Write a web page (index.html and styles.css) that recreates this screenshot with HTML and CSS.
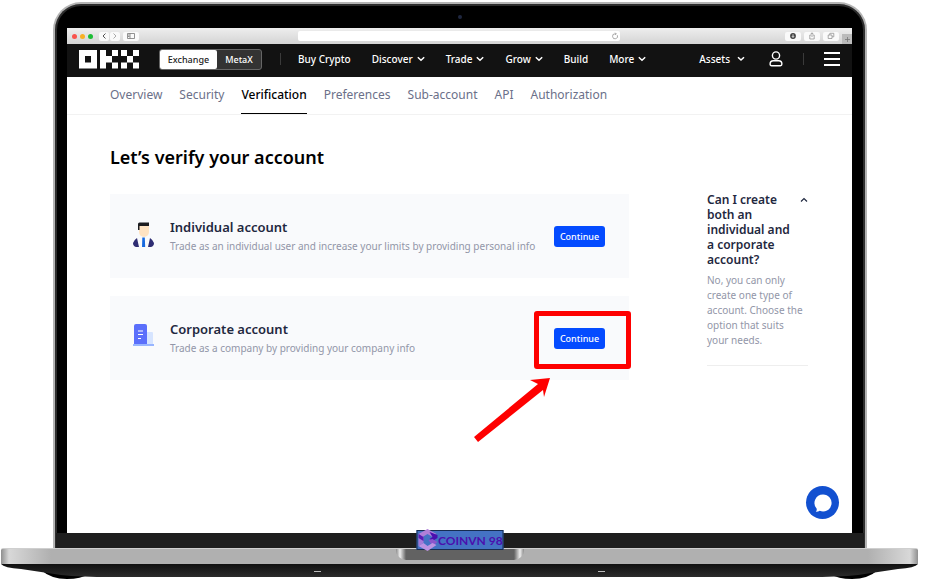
FILE: index.html
```html
<!DOCTYPE html>
<html lang="en">
<head>
  <meta charset="UTF-8">
  <meta name="viewport" content="width=device-width, initial-scale=1.0">
  <title>Account verification</title>
  <link rel="stylesheet" href="styles.css">
</head>
<body>
  <div class="laptop">
    <div class="lid">
      <div class="camera"></div>

      <div class="screen">
        <!-- Browser toolbar -->
        <div class="toolbar">
          <span class="dot red"></span>
          <span class="dot yellow"></span>
          <span class="dot green"></span>
          <div class="history">
            <button class="tool" aria-label="Back"><svg width="6" height="8" viewBox="0 0 6 8"><path d="M4.500 1.500 2 4l2.500 2.500" stroke="#555"/></svg></button>
            <button class="tool" aria-label="Forward"><svg width="6" height="8" viewBox="0 0 6 8"><path d="M1.500 1.500 4 4 1.500 6.500" stroke="#aaa"/></svg></button>
          </div>
          <button class="tool" aria-label="Sidebar"><svg width="8" height="8" viewBox="0 0 8 8"><path d="M.5 1.500h7v5h-7zM3 1.500v5M1 3h1.500M1 4.500h1.500" stroke="#777" stroke-width=".8"/></svg></button>
          <div class="address">
            <input type="text" aria-label="Address">
            <svg width="8" height="8" viewBox="0 0 8 8"><path d="M6.300 3.200A2.500 2.500 0 1 1 4 1.800h1M4.200.7 5.300 1.800 4.200 3" stroke="#888" stroke-width=".7"/></svg>
          </div>
          <div class="tools">
            <button class="tool" aria-label="Downloads"><svg width="8" height="8" viewBox="0 0 8 8"><circle cx="4" cy="4" r="2.900" fill="#444"/><path d="M4 2.300v3M2.900 4.200 4 5.400l1.100-1.200" stroke="#fff" stroke-width=".8"/></svg></button>
            <button class="tool" aria-label="Share"><svg width="8" height="8" viewBox="0 0 8 8"><path d="M3 3H1.800v4h4.400V3H5M4 5V.8M2.800 2 4 .8 5.200 2" stroke="#888" stroke-width=".7"/></svg></button>
            <button class="tool" aria-label="Tabs"><svg width="8" height="8" viewBox="0 0 8 8"><path d="M1.200 3h3.800v3.500H1.200zM2.800 3V1.300h4v3.500H5" stroke="#888" stroke-width=".7"/></svg></button>
          </div>
          <button class="new-tab" aria-label="New tab"><svg width="7" height="7" viewBox="0 0 7 7"><path d="M3.500 1v5M1 3.500h5" stroke="#777" stroke-width=".8"/></svg></button>
        </div>

        <header class="header">
          <a href="#" class="logo" aria-label="OKX">
            <svg width="61" height="19" viewBox="0 0 61 19">
              <g fill="#fff">
                <path d="M0 0h18v18.500H0zM6 6v6.500h6V6z" fill-rule="evenodd"/>
                <path d="M21 0h6v6h6v6.500h-6v6h-6zM33 0h6v6h-6zM33 12.500h6v6h-6z"/>
                <path d="M42 0h6v6h-6zM54 0h6v6h-6zM48 6h6v6.500h-6zM42 12.500h6v6h-6zM54 12.500h6v6h-6z"/>
              </g>
            </svg>
          </a>
          <div class="switch">
            <button class="active">Exchange</button>
            <button>MetaX</button>
          </div>
          <span class="divider"></span>
          <nav class="menu">
            <a href="#">Buy Crypto</a>
            <a href="#">Discover <svg class="chevron" viewBox="0 0 8 6"><path d="m.8 1.200 3.200 3 3.200-3"/></svg></a>
            <a href="#">Trade <svg class="chevron" viewBox="0 0 8 6"><path d="m.8 1.200 3.200 3 3.200-3"/></svg></a>
            <a href="#">Grow <svg class="chevron" viewBox="0 0 8 6"><path d="m.8 1.200 3.200 3 3.200-3"/></svg></a>
            <a href="#">Build</a>
            <a href="#">More <svg class="chevron" viewBox="0 0 8 6"><path d="m.8 1.200 3.200 3 3.200-3"/></svg></a>
          </nav>
          <div class="user-menu">
            <a href="#" class="assets">Assets <svg class="chevron" viewBox="0 0 8 6"><path d="m1 1.200 3 2.800 3-2.800"/></svg></a>
            <button class="icon-button" aria-label="Profile"><svg width="14" height="16" viewBox="0 0 14 16"><circle cx="7" cy="4.500" r="3.600"/><path d="M4.300 9.800h5.400c2 0 3.200 1.500 3.200 3.300 0 1-.5 1.600-1.500 1.600H2.600c-1 0-1.500-.6-1.500-1.600 0-1.800 1.200-3.300 3.200-3.300z"/></svg></button>
            <span class="divider"></span>
            <button class="icon-button" aria-label="Menu"><svg width="16" height="16" viewBox="0 0 16 16"><path d="M0 2h16M0 8h16M0 14h16" stroke-width="2"/></svg></button>
          </div>
        </header>

        <nav class="tabs">
          <a href="#">Overview</a>
          <a href="#">Security</a>
          <a href="#" class="active">Verification</a>
          <a href="#">Preferences</a>
          <a href="#">Sub-account</a>
          <a href="#">API</a>
          <a href="#">Authorization</a>
        </nav>

        <main class="content">
          <section class="accounts">
            <h1>Let’s verify your account</h1>

            <div class="card">
              <svg class="card-icon" viewBox="0 0 22 26">
                <path d="M6 1h10v8a5 5 0 0 1-10 0z" fill="#ffe3c2"/>
                <path d="M5 7V1q0-1.500 1.500-1.500H16V3H6.500v4z" fill="#1c1c20"/>
                <path d="m4 15 2 9H3q-3-1-3-4 1-3 4-5zM17 15l-2 9h3q3-1 3-4-1-3-4-5z" fill="#2f2d73"/>
                <path d="M9.300 14.500h2.500l.4 9.500H9z" fill="#1769df"/>
              </svg>
              <div class="card-text">
                <h2>Individual account</h2>
                <p>Trade as an individual user and increase your limits by providing personal info</p>
              </div>
              <div class="action">
                <button class="continue">Continue</button>
              </div>
            </div>

            <div class="card">
              <svg class="card-icon" viewBox="0 0 22 26">
                <path d="M14 7h5q1 0 1 1v12h-6z" fill="#d6e4ff"/>
                <path d="M1 20V1q0-2 2-2h9q2 0 2 2v19z" fill="#5b6ffb"/>
                <path d="M5 6h5M5 9.500h5M5 13.500h3" stroke="#fff" stroke-width="1.200"/>
                <path d="M0 19h21v2H0z" fill="#98b5ff"/>
              </svg>
              <div class="card-text">
                <h2>Corporate account</h2>
                <p>Trade as a company by providing your company info</p>
              </div>
              <div class="action">
                <button class="continue">Continue</button>
                <span class="highlight"></span>
                <svg class="arrow" width="80" height="66" viewBox="0 0 80 66"><path d="M76 1 70 20 69 13 4 65 0 60 64 7 56 3z" fill="#fe0000"/></svg>
              </div>
            </div>
          </section>

          <aside class="faq">
            <details open>
              <summary>
                <span>Can I create both an individual and a corporate account?</span>
                <svg class="chevron" viewBox="0 0 8 6"><path d="m1 4.500 3-3 3 3"/></svg>
              </summary>
              <p>No, you can only create one type of account. Choose the option that suits your needs.</p>
            </details>
          </aside>
        </main>

        <button class="chat" aria-label="Chat">
          <svg width="20" height="20" viewBox="0 0 20 20"><path d="M10 1.500a8.500 8.500 0 1 1-3.300 16.300q-1.500 1-3.900.9 1.200-1.200.9-3A8.500 8.500 0 0 1 10 1.500z" fill="#fff"/></svg>
        </button>
      </div>

      <div class="chin"></div>
    </div>

    <div class="base">
      <div class="notch"></div>
      <div class="watermark">
        <svg width="21" height="24" viewBox="0 0 21 24">
          <path d="m1 6 9-5 9 5-4 3-5-3-5 3z" fill="#b07fd9"/>
          <path d="M1 6v12l5-3V9z" fill="#a679d8"/>
          <path d="m1 6 5 3v4l-5-3z" fill="#5a1bb5"/>
          <path d="m12 4 8 3v3l-5 3-3-2 3-2z" fill="#4a0fae"/>
          <path d="m11 12 4-1 5 3-5 4-2-3z" fill="#8a55cc"/>
          <path d="m1 18 5-3 4 3 5-3 4 2-9 6z" fill="#bd92e2"/>
        </svg>
        <span>COINVN 98</span>
      </div>
    </div>
    <svg class="underside" viewBox="0 0 917 16" preserveAspectRatio="none">
      <defs>
        <linearGradient id="shade" x1="0" y1="0" x2="0" y2="1">
          <stop offset="0" stop-color="#101010"/>
          <stop offset="1" stop-color="#2b2b2b"/>
        </linearGradient>
      </defs>
      <path d="M40 6q10 9 26 9 14 0 22-5zM877 6q-10 9-26 9-14 0-22-5z" fill="#000"/>
      <path d="M0 0h917q-3 4-20 5l-40 6q-20 2-50 2H110q-30 0-50-2L20 5Q3 4 0 0z" fill="url(#shade)"/>
      <path d="M313 7.500h7M597 7.500h7" stroke="#bbb"/>
    </svg>
  </div>
</body>
</html>
```

FILE: styles.css
```css
* {
  margin: 0;
  padding: 0;
  box-sizing: border-box;
}

body {
  font-family: "Noto Sans", "Open Sans", sans-serif;
  background-color: #fff;
  color: #000;
}

a {
  color: inherit;
  text-decoration: none;
}

button {
  font: inherit;
  color: inherit;
  background: none;
  border: none;
  cursor: pointer;
}

svg {
  display: block;
  flex-shrink: 0;
  fill: none;
}

/* Laptop */
.laptop {
  display: flex;
  flex-direction: column;
  min-height: 100vh;
  padding: 2px 8px 2px 1px;
}

.lid {
  flex: 1;
  display: flex;
  flex-direction: column;
  margin: 0 51px 0 52px;
  padding: 0 13px 0 12px;
  background-color: #000;
  border: 2px solid #b4b4b4;
  border-bottom: none;
  border-radius: 28px 28px 0 0;
  box-shadow: inset 0 0 0 2px #2d2d2d;
}

.camera {
  width: 4px;
  height: 4px;
  margin: 11px auto 9px;
  border-radius: 50%;
  background-color: #1f2740;
}

.screen {
  flex: 1;
  display: flex;
  flex-direction: column;
  position: relative;
  background-color: #fff;
}

.chin {
  height: 15px;
  margin: 0 -12px 0 -11px;
  background-color: #1e1e1e;
}

.base {
  position: relative;
  height: 16px;
  background: linear-gradient(to right, #8f8f8f, #d8d8d8 8px, #b0b0b0 50px, #b0b0b0 calc(100% - 50px), #d8d8d8 calc(100% - 8px), #8f8f8f);
  border-top: 1px solid #cfcfcf;
  border-radius: 2px 2px 0 0;
}

.notch {
  width: 128px;
  height: 11px;
  margin: 0 auto;
  background: linear-gradient(to right, #888, #eee 4px, #626262 10px, #626262 118px, #eee 124px, #888);
  border-radius: 0 0 10px 10px;
}

.underside {
  width: 100%;
  height: 16px;
}

.watermark {
  position: absolute;
  top: -19px;
  left: 50%;
  transform: translateX(-50%);
  display: flex;
  align-items: center;
  width: 87px;
  height: 20px;
  background-color: #4472c4;
  border: 1px solid #172c51;
  color: #4a0fae;
  font-size: 12px;
  font-weight: 700;
  font-family: Lato, sans-serif;
  white-space: nowrap;
}

/* Browser toolbar */
.toolbar {
  display: flex;
  align-items: center;
  height: 16px;
  padding-left: 5px;
  gap: 3px;
  background: linear-gradient(#eee, #d4d4d4);
}

.dot {
  width: 5px;
  height: 5px;
  border-radius: 50%;
}

.red {
  background-color: #f9524c;
}

.yellow {
  background-color: #f8b024;
}

.green {
  background-color: #1cbd35;
}

.tool {
  display: grid;
  place-items: center;
  width: 16px;
  height: 9px;
  background-color: #fafafa;
  border-radius: 2px;
}

.history {
  display: flex;
  gap: 1px;
  margin: 0 0 0 3px;
}

.history .tool {
  width: 10px;
}

.address {
  flex: 1;
  display: flex;
  align-items: center;
  height: 10px;
  margin: 0 162px 0 156px;
  padding-right: 1px;
  background-color: #fff;
  border-radius: 2px;
}

.address input {
  flex: 1;
  min-width: 0;
  height: 8px;
  border: none;
  outline: none;
  background: none;
}

.tools {
  display: flex;
  gap: 3px;
}

.new-tab {
  display: grid;
  place-items: center;
  align-self: flex-end;
  width: 10px;
  height: 10px;
  background-color: #bbb;
}

/* Header */
.header {
  display: flex;
  align-items: center;
  height: 33px;
  padding: 0 12px 3px;
  background-color: #121212;
  color: #fff;
  font-size: 10px;
  font-weight: 500;
  white-space: nowrap;
}

.switch {
  display: flex;
  margin: 0 18px 0 19px;
  background-color: #333;
  border: 1px solid #666;
  border-radius: 3px;
  font-size: 9px;
}

.switch button {
  width: 44px;
  height: 19px;
}

.switch .active {
  width: 57px;
  background-color: #fff;
  color: #222;
  border-radius: 2px;
}

.divider {
  width: 1px;
  height: 12px;
  background-color: #3a3a3a;
}

.menu {
  display: flex;
  gap: 21px;
  margin-left: 17px;
}

.menu a,
.assets {
  display: flex;
  align-items: center;
  gap: 4px;
}

.chevron {
  width: 8px;
  height: 6px;
  stroke: currentColor;
  stroke-width: 1.5;
}

.user-menu {
  display: flex;
  align-items: center;
  gap: 20px;
  margin-left: auto;
}

.assets {
  gap: 7px;
  margin-right: 4px;
}

.icon-button svg {
  stroke: #fff;
  stroke-width: 1.4;
}

/* Tabs */
.tabs {
  display: flex;
  gap: 17px;
  padding: 0 43px;
  border-bottom: 1px solid #f2f2f2;
  color: #6b7089;
  font-size: 12px;
  line-height: 36px;
  white-space: nowrap;
}

.tabs a {
  border-bottom: 1px solid transparent;
}

.tabs .active {
  color: #000;
  border-color: #000;
  font-weight: 500;
}

/* Content */
.content {
  display: flex;
  gap: 78px;
  padding: 29px 44px 40px 43px;
}

.accounts {
  flex: 1;
}

h1 {
  margin-bottom: 23px;
  font-size: 18px;
  font-weight: 600;
  line-height: 27px;
}

.card {
  display: flex;
  align-items: center;
  height: 84px;
  margin-bottom: 18px;
  padding: 0 24px 0 23px;
  background-color: #f9fafc;
}

.card-icon {
  width: 22px;
  height: 26px;
  margin-right: 15px;
  overflow: visible;
}

.card-text {
  flex: 1;
  white-space: nowrap;
}

h2 {
  color: #1f2840;
  font-size: 13px;
  font-weight: 600;
  line-height: 20px;
}

.card-text p {
  color: #9296a8;
  font-size: 10px;
  line-height: 18px;
}

.action {
  position: relative;
}

.continue {
  display: block;
  width: 51px;
  height: 21px;
  background-color: #044bff;
  border-radius: 3px;
  color: #fff;
  font-size: 9px;
  font-weight: 500;
}

/* Marker over the corporate button */
.highlight {
  position: absolute;
  top: -17px;
  left: -20px;
  width: 97px;
  height: 58px;
  border: 5px solid #fe0000;
  border-radius: 3px;
}

.arrow {
  position: absolute;
  top: 49px;
  left: -80px;
}

/* FAQ */
.faq {
  width: 101px;
  padding-top: 48px;
}

.faq details {
  padding-bottom: 17px;
  border-bottom: 1px solid #eee;
}

.faq summary {
  display: flex;
  justify-content: space-between;
  gap: 8px;
  color: #1f2840;
  font-size: 12px;
  font-weight: 600;
  line-height: 15px;
  list-style: none;
  cursor: pointer;
}

.faq .chevron {
  margin-top: 5px;
  stroke-width: 1.2;
}

.faq p {
  margin-top: 6px;
  padding-right: 3px;
  color: #9296a8;
  font-size: 10px;
  line-height: 15px;
}

/* Chat button */
.chat {
  position: absolute;
  right: 13px;
  bottom: 14px;
  display: grid;
  place-items: center;
  width: 33px;
  height: 33px;
  background-color: #1250d0;
  border-radius: 50%;
}
```
